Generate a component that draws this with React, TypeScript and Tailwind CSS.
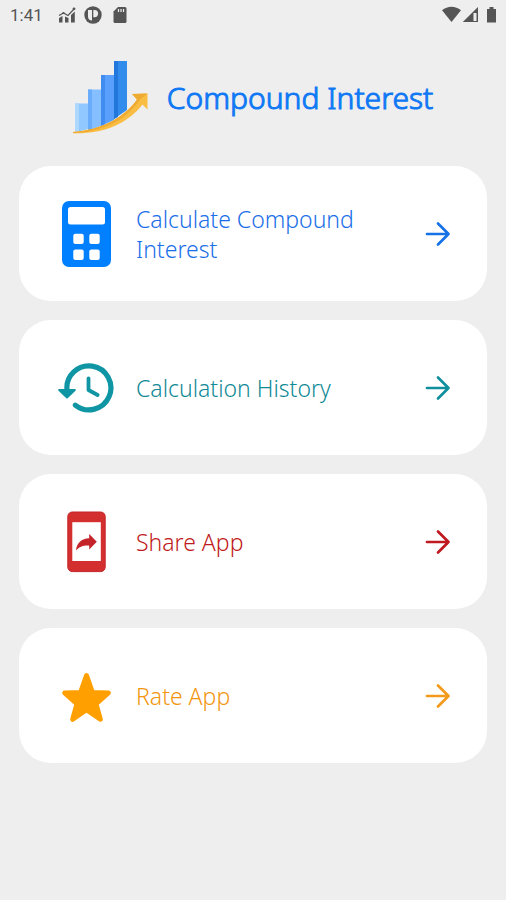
import type { ReactNode } from 'react'

const items = [
  { title: 'Calculate Compound Interest', href: '#calculate', text: 'text-[#1a6ee8]', arrow: 'text-[#1672e6]', icon: <CalculatorIcon /> },
  { title: 'Calculation History', href: '#history', text: 'text-[#108a96]', arrow: 'text-[#108f9c]', icon: <HistoryIcon /> },
  { title: 'Share App', href: '#share', text: 'text-[#bf1a20]', arrow: 'text-[#bf1a20]', icon: <ShareIcon /> },
  { title: 'Rate App', href: '#rate', text: 'text-[#f2960f]', arrow: 'text-[#f39a1b]', icon: <StarIcon /> },
]

function CalculatorIcon() {
  return (
    <svg viewBox="0 0 56 68" className="h-[68px] w-14" aria-hidden="true">
      <rect x="4" y="1" width="49" height="66" rx="7" fill="#007fff" />
      <g fill="#fff">
        <rect x="10" y="7" width="37" height="17.5" rx="2.5" />
        <rect x="15.3" y="33.7" width="10.4" height="10.4" rx="2" />
        <rect x="31.3" y="33.7" width="10.4" height="10.4" rx="2" />
        <rect x="15.3" y="49.5" width="10.4" height="10.4" rx="2" />
        <rect x="31.3" y="49.5" width="10.4" height="10.4" rx="2" />
      </g>
    </svg>
  )
}

function HistoryIcon() {
  return (
    <svg viewBox="0 0 56 68" className="h-[68px] w-14" fill="none" stroke="#0f95a3" strokeLinecap="round" strokeLinejoin="round" aria-hidden="true">
      <path d="M9 36 A22 22 0 1 1 17.4 51.2" strokeWidth="5.2" />
      <path d="M30.5 24.5 V36 L39.6 41" strokeWidth="3.8" />
      <path d="M1.2 36 H16.8 L9 43.5 Z" fill="#0f95a3" strokeWidth="2" />
    </svg>
  )
}

function ShareIcon() {
  return (
    <svg viewBox="0 0 56 68" className="h-[68px] w-14" aria-hidden="true">
      <rect x="9.8" y="4" width="37.4" height="59.6" rx="4.5" fill="#d32f2f" stroke="#c4242a" />
      <rect x="14.3" y="14.2" width="28.5" height="38.8" fill="#fff" />
      <path d="M38.8 33.7 L31.2 26 V30.2 C23.5 30.5 18.6 35 18 42.6 C21.5 38.5 25.5 37.3 31.2 37.6 V41.4 Z" fill="#c4242a" />
    </svg>
  )
}

function StarIcon() {
  return (
    <svg viewBox="0 0 56 68" className="h-[68px] w-14" aria-hidden="true">
      <path
        d="M28.5 13.5 L34.4 30.4 L50.3 31 L38 42 L42.3 57.3 L28.5 47.8 L14.7 57.3 L19 42 L6.7 31 L22.6 30.4 Z"
        fill="#ffa000"
        stroke="#ffa000"
        strokeWidth="5"
        strokeLinejoin="round"
      />
    </svg>
  )
}

function Logo() {
  return (
    <svg viewBox="0 0 76 74" className="h-[74px] w-[76px]" aria-hidden="true">
      <path d="M2 42.5 H15 V68 L2 71.5 Z" fill="#90c8ff" />
      <path d="M2 42.5 H6 V71 L2 71.5 Z" fill="#acd8ff" />
      <path d="M15 28.5 H28 V65 L15 69.5 Z" fill="#85bfff" />
      <path d="M15 28.5 H19 V68 L15 69.5 Z" fill="#68acfa" />
      <path d="M28 14 H41 V59 L28 65 Z" fill="#58a0fb" />
      <path d="M28 14 H32 V63 L28 65 Z" fill="#408cf0" />
      <path d="M41 0 H54 V49 L41 58 Z" fill="#318cec" />
      <path d="M41 0 H45 V56 L41 58 Z" fill="#2277dd" />
      <path d="M0 71 C28 69 51 57 64 38.5 L59 33 L74.5 32.5 V48.5 L69.5 43.5 C54 63 31 73 0 72.3 Z" fill="#f9bd43" />
      <path d="M0 71 C28 69 51 57 64 38.5 L59 33 L74.5 32.5 L67.5 38 C52 60 29 71 0 72 Z" fill="#eeaa31" />
    </svg>
  )
}

function StatusBar() {
  return (
    <header className="flex h-[30px] items-center justify-between pl-[10px] pr-2 text-[#555]">
      <div className="flex items-center">
        <time className="w-12 font-[Roboto,sans-serif] text-[17px] leading-5">1:41</time>
        <svg viewBox="0 0 18 18" className="h-[18px] w-[18px]" fill="currentColor" aria-hidden="true">
          <path d="M1 12 L4.5 10 V16.5 H1 Z M7 10.5 L10.5 12 V16.5 H7 Z M13 9 L16.8 5.5 V16.5 H13 Z" />
          <path d="M1 9.5 L5.5 7 L10 9.5 L16 3" fill="none" stroke="currentColor" strokeWidth="1.2" />
          <circle cx="16" cy="2.8" r="1.4" />
          <circle cx="5.5" cy="7" r="1.1" />
        </svg>
        <svg viewBox="0 0 18 18" className="ml-[8px] h-[18px] w-[18px]" aria-hidden="true">
          <circle cx="9" cy="9" r="8.7" fill="currentColor" />
          <path d="M4 4 H8 V14.5 C5.5 14.5 4 13 4 10.5 Z" fill="#eee" />
          <path d="M9.3 4 H10.5 A3.6 3.6 0 0 1 10.5 11.2 H9.3 Z" fill="#eee" />
        </svg>
        <svg viewBox="0 0 14 18" className="ml-[11px] h-[18px] w-[14px]" aria-hidden="true">
          <path d="M5 1 H12 Q13.5 1 13.5 2.5 V15.5 Q13.5 17 12 17 H2 Q0.5 17 0.5 15.5 V5.5 Z" fill="currentColor" />
          <path d="M5.5 3 V6 M8 3 V6 M10.5 3 V6" stroke="#eee" strokeWidth="1.2" />
        </svg>
      </div>
      <svg viewBox="0 0 56 18" className="h-[18px] w-14" fill="currentColor" aria-hidden="true">
        <path d="M0 4.3 C5.5 -0.5 13.5 -0.5 19 4.3 L9.5 16 Z" />
        <path fillRule="evenodd" d="M20.8 16 L36 1 V16 Z M31.5 7 V15 H34.5 V7 Z" />
        <path d="M45 3 H47.5 V1 H51.5 V3 H54 V16.5 H45 Z" />
      </svg>
    </header>
  )
}

function MenuCard({ title, href, text, arrow, icon }: { title: string; href: string; text: string; arrow: string; icon: ReactNode }) {
  return (
    <a href={href} className="flex min-h-[135px] items-center rounded-[32px] bg-white pl-[39px] pr-9">
      <span className="shrink-0">{icon}</span>
      <span className={`ml-[22px] flex-1 pr-12 text-[23px] font-light leading-[30px] ${text}`}>{title}</span>
      <svg viewBox="0 0 26 26" className={`h-[26px] w-[26px] shrink-0 ${arrow}`} fill="none" stroke="currentColor" strokeWidth="2.7" strokeLinecap="round" strokeLinejoin="round" aria-hidden="true">
        <path d="M2 13 H23.5 M13 2.5 L23.5 13 L13 23.5" />
      </svg>
    </a>
  )
}

export default function App() {
  return (
    <div className="min-h-screen bg-[#eeeeee] font-['Noto_Sans','Open_Sans',sans-serif]">
      <StatusBar />
      <main className="px-[19px] pb-8">
        <div className="flex h-[136px] items-center justify-center gap-[18px]">
          <Logo />
          <h1 className="text-[30px] font-light leading-10 text-[#0f78f5] [-webkit-text-stroke:1px]">Compound Interest</h1>
        </div>
        <nav className="flex flex-col gap-[19px]">
          {items.map((item) => (
            <MenuCard key={item.title} {...item} />
          ))}
        </nav>
      </main>
    </div>
  )
}
